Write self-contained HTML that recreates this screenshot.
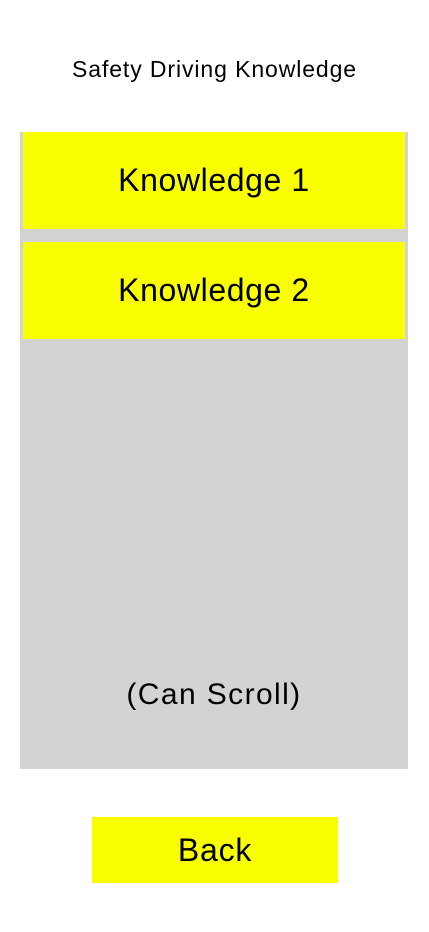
<!DOCTYPE html>
<html><head><meta charset="utf-8"><style>
html,body{margin:0;padding:0;background:#fff;width:429px;height:932px;overflow:hidden;font-family:"Liberation Sans",sans-serif;color:#000}
.t{position:absolute;left:0;width:429px;top:55px;text-align:center;font-size:23px;line-height:28px;letter-spacing:0.9px}
.g{position:absolute;left:20px;top:132px;width:388px;height:637px;background:#d3d3d3}
.y{position:absolute;background:#f9ff00;text-align:center;font-size:32px;letter-spacing:0.6px}
</style></head><body>
<div class="t">Safety Driving Knowledge</div>
<div class="g"></div>
<div class="y" style="left:23px;top:132px;width:382px;height:97px;line-height:97px">Knowledge 1</div>
<div class="y" style="left:23px;top:242px;width:382px;height:97px;line-height:97px">Knowledge 2</div>
<div style="position:absolute;left:20px;width:388px;top:675px;text-align:center;font-size:30px;line-height:40px;letter-spacing:1.4px">(Can Scroll)</div>
<div class="y" style="left:92px;top:817px;width:246px;height:66px;line-height:66px;letter-spacing:0.8px">Back</div>
</body></html>
